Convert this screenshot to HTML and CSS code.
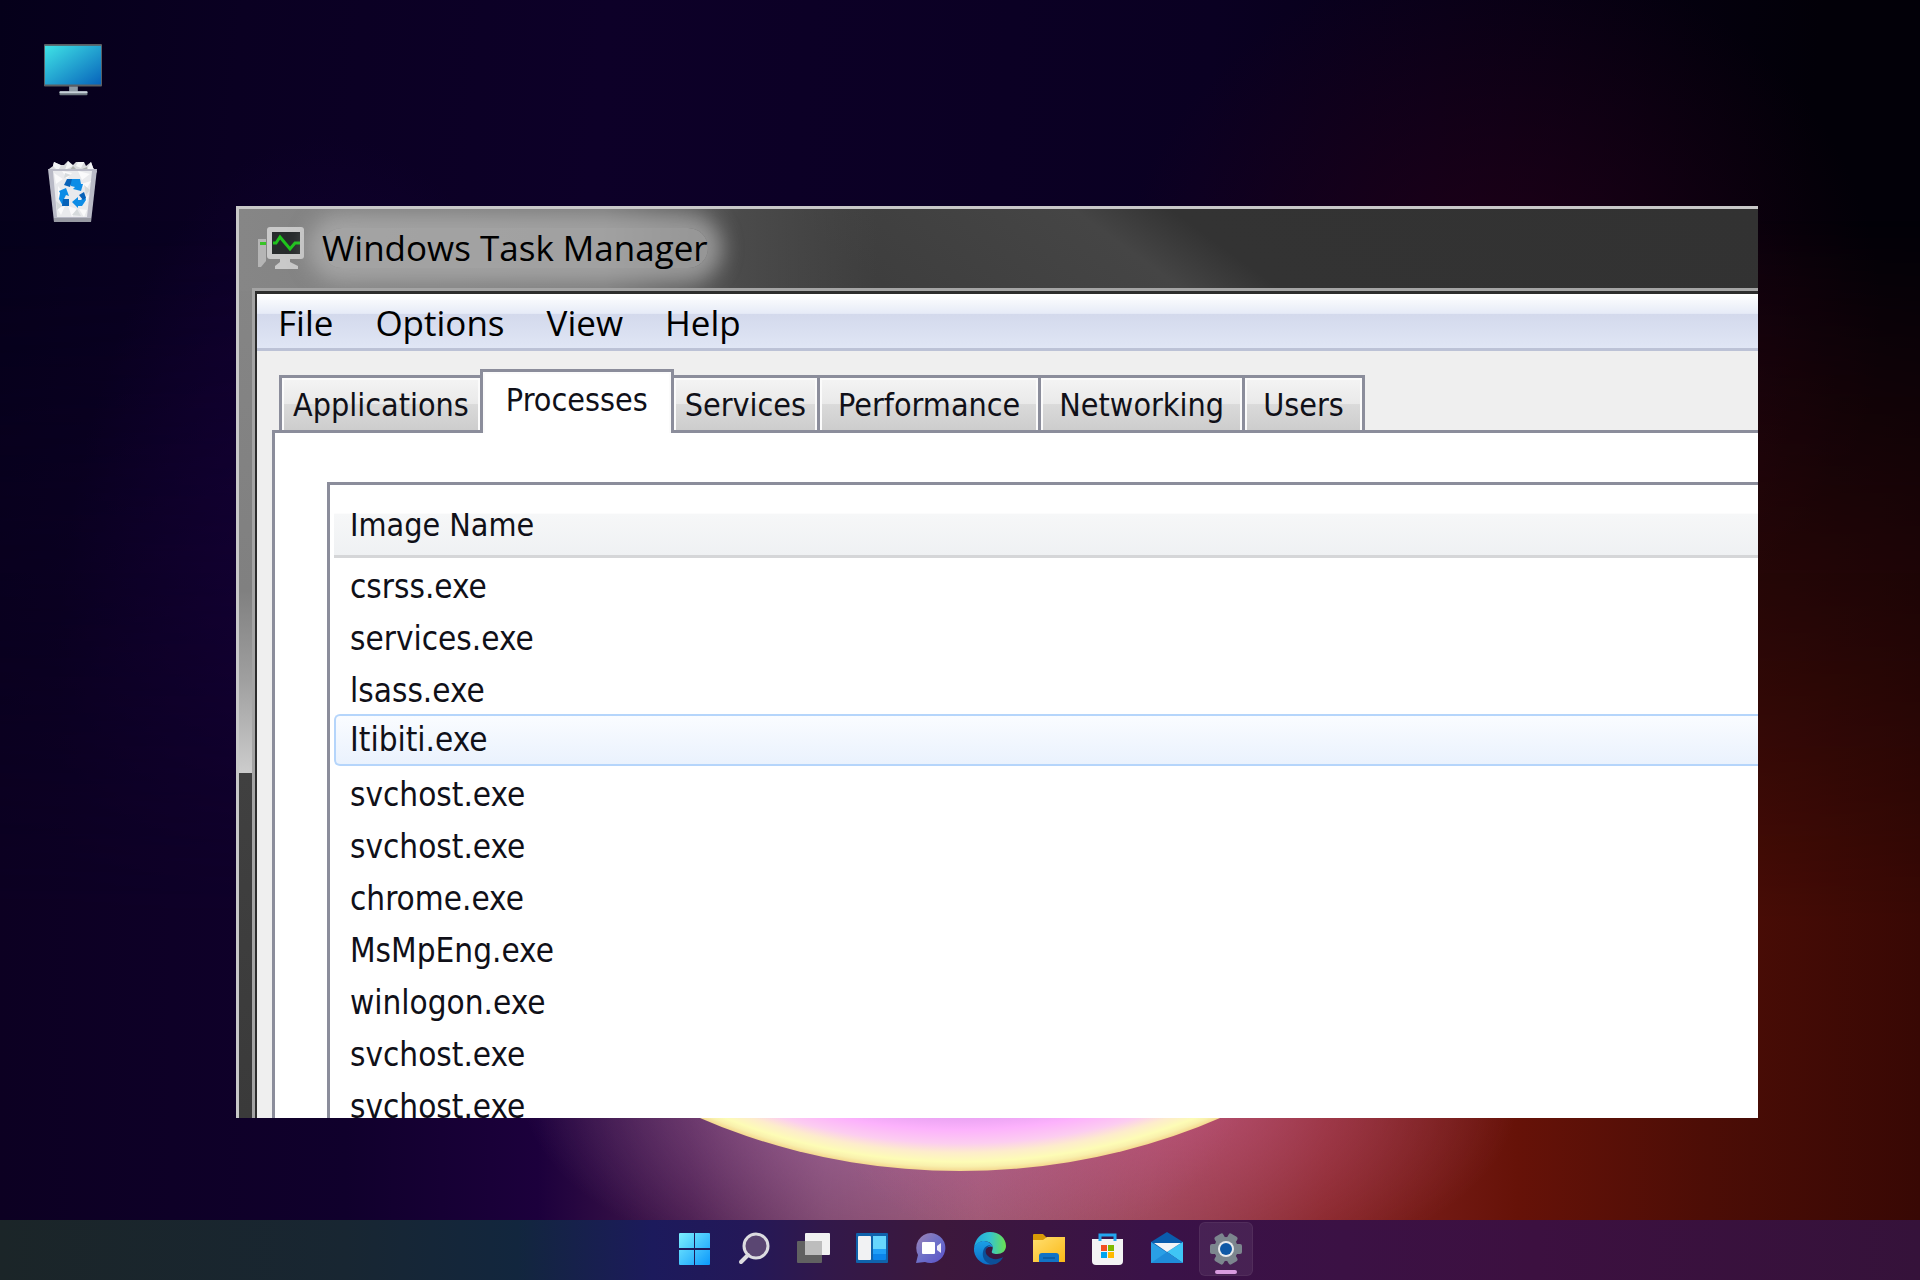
FILE: index.html
```html
<!DOCTYPE html>
<html lang="en">
<head>
    <meta charset="UTF-8">
    <meta name="viewport" content="width=device-width, initial-scale=1.0">
    <title>Windows Task Manager</title>
    <link rel="stylesheet" href="styles.css">
</head>
<body>
    <main class="desktop">
        <div class="ring"></div>

        <div class="shortcuts">
            <button class="shortcut" aria-label="This PC">
                <svg width="60" height="54" viewBox="0 0 60 54">
                    <defs>
                        <linearGradient id="screen" x1="0" y1="0" x2="1" y2="1">
                            <stop offset="0" stop-color="#3fe3e6"/>
                            <stop offset="1" stop-color="#0763bb"/>
                        </linearGradient>
                    </defs>
                    <rect x="0" y="0" width="60" height="44" rx="1" fill="#5b5f63"/>
                    <rect x="1" y="2" width="58" height="40" fill="url(#screen)"/>
                    <rect x="26" y="44" width="9" height="6" fill="#8d99a3"/>
                    <rect x="16" y="49" width="29" height="4" rx="1" fill="#6f7a82"/>
                    <rect x="16" y="49" width="29" height="2" rx="1" fill="#c6d0d8"/>
                </svg>
            </button>
            <button class="shortcut" aria-label="Recycle Bin">
                <svg width="50" height="62" viewBox="0 0 50 62">
                    <path d="M1 8l4-3 1-4 6 3 4 0 4-4 5 4 3-3 8 0 2 4 5-4 2 6 4 3-2 5H2z" fill="#d9dadd"/>
                    <path d="M5 5l1-4 7 3-3 6zM20 0l5 5-8 4zM28 5l2-4 6 0-3 6zM39 8l4-7 3 8z" fill="#f4f5f6"/>
                    <path d="M25 5l4 4-8 1zM34 8l5-2 1 4z" fill="#aeb2ae"/>
                    <path d="M0 8h49l-6 53H6z" fill="#b9bac6"/>
                    <path d="M5 10h39l-5 46H9z" fill="#e9eaed"/>
                    <path d="M6 12l9 6-7 5zM14 10l10 2-5 6zM30 10l12 3-8 6zM10 25l6 8-6 4zM43 20l-5 9-5-6zM38 42l3-8-5 3zM9 47l8-2-4 9zM20 45l9 3-5 8zM31 48l8 1-3 7z" fill="#fafafb"/>
                    <path d="M36 24l6 5-4 5zM8 40l6 5-5 4zM24 54l5-6 4 7zM17 12l6 2-7 3z" fill="#d6dadc"/>
                    <path d="M6 57h37v4H6z" fill="#989aa3"/>
                    <path d="M19 18h13l1 5 2 0-2 7-8-2 2-2-4-1z" fill="#0d8ce6"/>
                    <path d="M11 30l7-3 3 8-3-1-2 4 5 1v6h-6l-4-7 1-6z" fill="#0d8ce6"/>
                    <path d="M37 35l1 4-4 6h-4v2l-6-6 6-5v3h3z" fill="#0d8ce6"/>
                    <path d="M19 18h5l-2 8-6-2zM15 38h6v7h-7zM31 34l5-3 2 6-3 2z" fill="#0862b8"/>
                </svg>
            </button>
        </div>

        <section class="window">
            <header class="title-bar">
                <svg class="title-icon" width="48" height="44" viewBox="0 0 48 44">
                    <path d="M0 13h8v22l-5 6H0z" fill="#b5b5b5"/>
                    <rect x="2" y="16" width="6" height="3" fill="#37c425"/>
                    <path d="M22 30h10v6l8 4v3H17v-3l5-4z" fill="#c9c9c9"/>
                    <rect x="9" y="1" width="37" height="32" rx="3" fill="#c9c9c9"/>
                    <rect x="14" y="6" width="28" height="22" fill="#272b2c"/>
                    <path d="M15 17h3l4-6 5 6 5 6 5-6h5" fill="none" stroke="#1fc41c" stroke-width="3"/>
                </svg>
                <h1 class="title-text">Windows Task Manager</h1>
            </header>

            <div class="window-body">
                <nav class="menu-bar">
                    <button class="menu-item">File</button>
                    <button class="menu-item">Options</button>
                    <button class="menu-item">View</button>
                    <button class="menu-item">Help</button>
                </nav>

                <div class="tabs" role="tablist">
                    <button class="tab" role="tab">Applications</button>
                    <button class="tab active" role="tab" aria-selected="true">Processes</button>
                    <button class="tab" role="tab">Services</button>
                    <button class="tab wide" role="tab">Performance</button>
                    <button class="tab wide" role="tab">Networking</button>
                    <button class="tab wide" role="tab">Users</button>
                </div>

                <div class="tab-panel">
                    <div class="process-list">
                        <table class="process-table">
                            <thead>
                                <tr><th>Image Name</th></tr>
                            </thead>
                            <tbody>
                                <tr><td>csrss.exe</td></tr>
                                <tr><td>services.exe</td></tr>
                                <tr><td>lsass.exe</td></tr>
                                <tr class="selected"><td>Itibiti.exe</td></tr>
                                <tr><td>svchost.exe</td></tr>
                                <tr><td>svchost.exe</td></tr>
                                <tr><td>chrome.exe</td></tr>
                                <tr><td>MsMpEng.exe</td></tr>
                                <tr><td>winlogon.exe</td></tr>
                                <tr><td>svchost.exe</td></tr>
                                <tr><td>svchost.exe</td></tr>
                            </tbody>
                        </table>
                    </div>
                </div>
            </div>
        </section>
    </main>

    <footer class="taskbar">
        <button class="task-button" aria-label="Start">
            <svg width="36" height="36" viewBox="0 0 36 36">
                <defs>
                    <linearGradient id="start" x1="0" y1="0" x2="1" y2="1">
                        <stop offset="0" stop-color="#7df0ff"/>
                        <stop offset="1" stop-color="#0b98fb"/>
                    </linearGradient>
                </defs>
                <path d="M2 3a1 1 0 0 1 1-1h14v15H2zM18 2h14a1 1 0 0 1 1 1v14H18zM2 19h15v15H3a1 1 0 0 1-1-1zM18 19h15v14a1 1 0 0 1-1 1H18z" fill="url(#start)"/>
            </svg>
        </button>
        <button class="task-button" aria-label="Search">
            <svg width="36" height="36" viewBox="0 0 36 36">
                <circle cx="20" cy="15" r="12" fill="#5a4672" stroke="#dcdce0" stroke-width="3"/>
                <path d="M12 24l-7 7" stroke="#dcdce0" stroke-width="4" stroke-linecap="round"/>
            </svg>
        </button>
        <button class="task-button" aria-label="Task View">
            <svg width="36" height="36" viewBox="0 0 36 36">
                <rect x="2" y="10" width="25" height="22" rx="1" fill="#616161"/>
                <rect x="10" y="2" width="25" height="22" rx="1" fill="#f1f1f1"/>
                <rect x="10" y="10" width="17" height="14" fill="#bdbdbd"/>
            </svg>
        </button>
        <button class="task-button" aria-label="Widgets">
            <svg width="36" height="36" viewBox="0 0 36 36">
                <rect x="2" y="2" width="32" height="30" rx="1" fill="#0f62ab"/>
                <rect x="4" y="5" width="13" height="24" rx="1" fill="#f1f2f3"/>
                <rect x="19" y="5" width="13" height="24" rx="1" fill="#0b84ea"/>
                <rect x="19" y="5" width="13" height="18" fill="#1f9ff8"/>
                <rect x="19" y="5" width="13" height="13" fill="#67d6fd"/>
            </svg>
        </button>
        <button class="task-button" aria-label="Chat">
            <svg width="36" height="36" viewBox="0 0 36 36">
                <defs>
                    <linearGradient id="chat" x1="0" y1="0" x2="1" y2="1">
                        <stop offset="0" stop-color="#a084b4"/>
                        <stop offset=".5" stop-color="#6d70c8"/>
                        <stop offset="1" stop-color="#5a50c8"/>
                    </linearGradient>
                </defs>
                <path d="M18 2a15 15 0 1 1-6 29l-9 1 2-8A15 15 0 0 1 18 2z" fill="url(#chat)"/>
                <rect x="9" y="11" width="13" height="12" rx="1" fill="#fff"/>
                <path d="M24 15l4-3v10l-4-3z" fill="#eceaf8"/>
            </svg>
        </button>
        <button class="task-button" aria-label="Microsoft Edge">
            <svg width="36" height="36" viewBox="0 0 36 36">
                <defs>
                    <linearGradient id="edge-top" x1="0" y1="0" x2="1" y2="0">
                        <stop offset="0" stop-color="#1ea7e0"/>
                        <stop offset=".5" stop-color="#35c3cf"/>
                        <stop offset="1" stop-color="#6be14f"/>
                    </linearGradient>
                    <linearGradient id="edge-side" x1="0" y1="0" x2="0" y2="1">
                        <stop offset="0" stop-color="#1ba0e6"/>
                        <stop offset="1" stop-color="#0b6cc6"/>
                    </linearGradient>
                </defs>
                <path d="M2 17C3 8 9 1 18 1c9 0 16 6 16 14 0 5-4 8-9 8-4 0-6-1-5-3 3-6-3-10-8-10-4 0-8 3-10 7z" fill="url(#edge-top)"/>
                <path d="M2 17c2-5 6-7 10-7 4 0 8 3 9 6-4-2-9 1-9 7 0 5 4 9 9 10C11 36 1 27 2 17z" fill="url(#edge-side)"/>
                <path d="M19 14c-6 2-7 8-3 11 4 4 10 4 15 1-2 5-8 9-13 7-6-2-8-8-7-12 1-5 4-7 8-7z" fill="#0c4f98"/>
            </svg>
        </button>
        <button class="task-button" aria-label="File Explorer">
            <svg width="36" height="36" viewBox="0 0 36 36">
                <defs>
                    <linearGradient id="folder" x1="0" y1="0" x2="1" y2="1">
                        <stop offset="0" stop-color="#ffdf70"/>
                        <stop offset="1" stop-color="#fbb917"/>
                    </linearGradient>
                </defs>
                <path d="M2 4a1 1 0 0 1 1-1h9l4 4v6H2z" fill="#d99a06"/>
                <path d="M2 9h10l4-3h18v25H2z" fill="url(#folder)"/>
                <path d="M8 31v-6a3 3 0 0 1 3-3h14a3 3 0 0 1 3 3v6z" fill="#1273c6"/>
                <path d="M12 27h12" stroke="#0c5ea6" stroke-width="2"/>
            </svg>
        </button>
        <button class="task-button" aria-label="Microsoft Store">
            <svg width="36" height="36" viewBox="0 0 36 36">
                <path d="M2 8h31v22a4 4 0 0 1-4 4H6a4 4 0 0 1-4-4z" fill="#f3f3f4"/>
                <path d="M10 10V4h15v6" fill="none" stroke="#22a5ee" stroke-width="3"/>
                <path d="M11 14h6v6h-6z" fill="#f25022"/>
                <path d="M18 14h6v6h-6z" fill="#7fba00"/>
                <path d="M11 21h6v6h-6z" fill="#00a4ef"/>
                <path d="M18 21h6v6h-6z" fill="#ffb900"/>
            </svg>
        </button>
        <button class="task-button" aria-label="Mail">
            <svg width="36" height="36" viewBox="0 0 36 36">
                <path d="M2 11L18 1l16 10v10H2z" fill="#0a5cad"/>
                <path d="M2 11l32 21H2z" fill="#2a9fe6"/>
                <path d="M34 11L18 21l16 11z" fill="#3fc5f5"/>
                <path d="M18 21l16 11H2z" fill="#1f8cda"/>
                <path d="M5 12h27L18 21z" fill="#f3f4f6"/>
            </svg>
        </button>
        <button class="task-button open" aria-label="Settings">
            <svg width="36" height="36" viewBox="0 0 36 36">
                <g fill="#7c868e">
                    <circle cx="18" cy="18" r="12"/>
                    <rect x="13" y="2" width="10" height="32" rx="2" transform="rotate(30 18 18)"/>
                    <rect x="13" y="2" width="10" height="32" rx="2" transform="rotate(90 18 18)"/>
                    <rect x="13" y="2" width="10" height="32" rx="2" transform="rotate(150 18 18)"/>
                </g>
                <circle cx="18" cy="18" r="8" fill="#e8eaec"/>
                <circle cx="18" cy="18" r="6" fill="#0f59a6"/>
            </svg>
        </button>
    </footer>
</body>
</html>
```
FILE: styles.css
```css
:root {
    --ui-font: "Open Sans", "Noto Sans", sans-serif;
    --list-font: "DejaVu Sans Condensed", "Noto Sans", sans-serif;
    --line: #8b8d9b;
    --face: #efefef;
}

* {
    box-sizing: border-box;
}

body {
    display: flex;
    flex-direction: column;
    height: 100vh;
    margin: 0;
    overflow: hidden;
    background: #06001a;
}

button {
    padding: 0;
    border: none;
    background: none;
    color: inherit;
    font: inherit;
}

svg {
    display: block;
}

/* Desktop and wallpaper */
.desktop {
    position: relative;
    flex: 1;
    overflow: hidden;
    background:
        radial-gradient(ellipse 20% 30% at 78% 26%, rgba(44,0,24,0.7) 0%, rgba(30,0,20,0) 100%),
        radial-gradient(ellipse 14% 45% at 17% 56%, #1a0042 0%, rgba(18,0,56,0) 100%),
        linear-gradient(95deg, #05001a 0%, #0a0022 12%, #0d0028 30%, #0a0022 60%, #020008 90%);
}

/* Light spilling from the ring, fading out towards the top */
.desktop::before {
    content: "";
    position: absolute;
    inset: 18% 0 0;
    background:
        radial-gradient(ellipse 18% 18% at 61% 88%, rgba(200,88,132,0.7) 0%, rgba(180,60,100,0) 100%),
        radial-gradient(ellipse 19% 20% at 46% 86%, rgba(176,112,168,0.8) 0%, rgba(120,60,130,0) 100%),
        linear-gradient(90deg, #0c0022 0%, #10002c 18%, #1c003c 28%, #451a4c 36%, #774466 43%, #985468 51%, #944450 60%, #842424 69%, #661208 79%, #4c0d06 89%, #380804 100%);
    mask-image: linear-gradient(180deg, transparent 0%, #000000 70%);
}

.ring {
    position: absolute;
    bottom: 49px;
    left: 50%;
    width: 1116px;
    height: 920px;
    margin-left: -558px;
    border-radius: 50%;
    background: radial-gradient(closest-side, #d898ec 0%, #e8a2f2 88%, #fcb2fc 91%, #fccdf0 94%, #fdeccc 96%, #fdfcb6 98%, #f9f0ac 99%, #f4d890 100%);
}

.shortcuts {
    position: relative;
    display: flex;
    flex-direction: column;
    align-items: flex-start;
    gap: 64px;
    padding: 43px 44px;
}

.shortcut {
    display: flex;
    justify-content: center;
    width: 58px;
}

/* Window frame */
.window {
    position: absolute;
    top: 206px;
    right: 162px;
    bottom: 102px;
    left: 236px;
    display: flex;
    flex-direction: column;
    overflow: hidden;
    padding-left: 16px;
    border-top: 3px solid #c8c8c8;
    border-left: 3px solid #c8c8c8;
    background: linear-gradient(180deg, #868686 0%, #808080 42%, #a0a0a0 52%, #cccccc 62%, #404040 62%, #3a3a3a 100%);
}

.title-bar {
    display: flex;
    align-items: center;
    gap: 16px;
    height: 82px;
    margin-left: -16px;
    padding: 0 0 4px 19px;
    background:
        linear-gradient(90deg, #868686 0%, #7c7c7c 24%, rgba(76,76,76,0.9) 33%, rgba(64,64,64,0) 42%),
        linear-gradient(36deg, #3c3c3c 0%, #3e3e3e 40%, #454545 58%, #333333 64%, #323232 100%);
}

.title-icon {
    flex: none;
}

.title-text {
    margin: 0;
    border-radius: 20px;
    background: rgba(176,176,176,0.7);
    box-shadow: 0 0 20px 14px rgba(176,176,176,0.7);
    color: #000000;
    font: 400 35px/40px var(--ui-font);
}

.window-body {
    display: flex;
    flex: 1;
    flex-direction: column;
    min-height: 0;
    border: solid #2c2c2c;
    border-width: 3px 0 0 2px;
    outline: 3px solid #a4a4a4;
    background: var(--face);
}

/* Menu */
.menu-bar {
    display: flex;
    gap: 42px;
    padding: 3px 22px 0 21px;
    border-bottom: 3px solid #bcc2d6;
    background: linear-gradient(180deg, #ffffff 0%, #e6ebf7 36%, #d3d9ec 37%, #e0e6f5 100%);
}

.menu-item {
    color: #000000;
    font: 400 35px/51px var(--ui-font);
}

/* Tabs */
.tabs {
    display: flex;
    align-items: flex-end;
    padding: 18px 22px 0;
}

.tab {
    min-width: 120px;
    height: 55px;
    padding: 2px 11px 0;
    border: solid var(--line);
    border-width: 3px 3px 0 0;
    background: linear-gradient(180deg, #f4f4f4 0%, #e9e9e9 50%, #dadada 51%, #cdcdcd 100%);
    box-shadow: inset 2px 2px #fbfbfb, inset -2px 0 #fbfbfb;
    color: #101018;
    font: 400 32px/48px var(--list-font);
}

.tab:first-child {
    border-left-width: 3px;
}

.tab.wide {
    padding: 2px 18px 0;
}

.tab.active {
    position: relative;
    height: 64px;
    margin: 0 0 -3px -3px;
    padding: 0 23px 6px;
    border-left-width: 3px;
    background: #ffffff;
}

.tab-panel {
    display: flex;
    flex: 1;
    min-height: 0;
    margin-left: 15px;
    padding: 49px 0 0 52px;
    border: solid var(--line);
    border-width: 3px 0 0 3px;
    background: #ffffff;
}

/* Process list */
.process-list {
    flex: 1;
    overflow: hidden;
    padding-left: 4px;
    border: solid var(--line);
    border-width: 3px 0 0 3px;
}

.process-table {
    width: 100%;
    border-collapse: separate;
    border-spacing: 0;
    color: #101018;
    font: 400 33px/52px var(--list-font);
    text-align: left;
}

.process-table th {
    height: 73px;
    padding: 9px 16px 0;
    border-bottom: 3px solid #d5d6d8;
    background: linear-gradient(180deg, #ffffff 40%, #f6f7f8 42%, #eff1f3 100%);
    font-size: 32px;
    font-weight: 400;
}

.process-table td {
    height: 52px;
    padding: 6px 16px 0;
    line-height: 46px;
}

.process-table .selected td {
    padding-top: 0;
    padding-left: 14px;
    border: 2px solid #b5d5fb;
    border-right: none;
    border-radius: 6px 0 0 6px;
    background: linear-gradient(180deg, #fafcff 0%, #eaf2fd 100%);
}

/* Taskbar */
.taskbar {
    display: flex;
    align-items: center;
    justify-content: center;
    gap: 5px;
    height: 60px;
    padding-bottom: 2px;
    background: linear-gradient(90deg, #1b2528 0%, #182632 18%, #12263e 27%, #1c1a5c 34%, #241858 39%, #32184a 43%, #3c183c 49%, #3a1248 60%, #3c1040 80%, #35123a 100%);
}

.task-button {
    display: flex;
    align-items: center;
    justify-content: center;
    width: 54px;
    height: 54px;
    border-radius: 6px;
}

.task-button.open {
    position: relative;
    border: 1px solid rgba(255,255,255,0.05);
    background: rgba(255,255,255,0.07);
}

.task-button.open::after {
    content: "";
    position: absolute;
    bottom: 1px;
    width: 22px;
    height: 4px;
    border-radius: 2px;
    background: #d99be0;
}
```
